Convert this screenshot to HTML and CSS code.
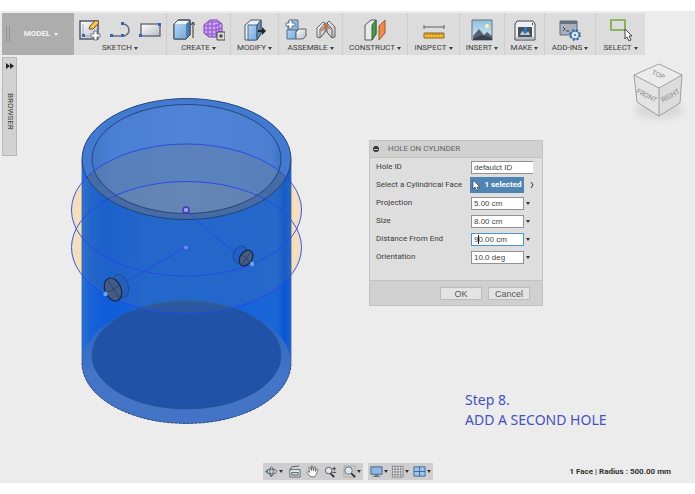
FILE: index.html
```html
<!DOCTYPE html>
<html lang="en">
<head>
<meta charset="utf-8">
<title>Hole on Cylinder</title>
<link rel="stylesheet" href="styles.css">
</head>
<body>
<svg class="defs" aria-hidden="true">
  <defs>
    <linearGradient id="blue" x1="0" y1="0" x2="1" y2="1"><stop offset="0" stop-color="#b5d6f2"/><stop offset="1" stop-color="#75a9da"/></linearGradient>
    <linearGradient id="pale" x1="0" y1="0" x2="1" y2="1"><stop offset="0" stop-color="#ffffff"/><stop offset="1" stop-color="#b5bac4"/></linearGradient>
    <linearGradient id="sky" x1="0" y1="0" x2="0" y2="1"><stop offset="0" stop-color="#91bedd"/><stop offset="1" stop-color="#d8eaf1"/></linearGradient>
  </defs>
</svg>
<div class="app">
  <header class="toolbar">
    <button class="workspace" type="button"><span class="grip"></span><span>MODEL</span><i class="caret"></i></button>
    <div class="group">
      <div class="icons">
        <svg class="icon" viewBox="0 0 22 22"><rect x="1" y="2" width="18" height="18" fill="url(#pale)" stroke="#4b515c" stroke-width="1.4"/><path d="M4 5v12h12" fill="none" stroke="#9aa6bb"/><rect x="3" y="15" width="3" height="3" fill="#3263c3"/><path d="M10 10l1-3 6-6 3 3-6 6z" fill="#f4c34c" stroke="#76511d"/><path d="M15 12h3v3h3v3h-3v3h-3v-3h-3v-3h3z" fill="#fff" stroke="#737985"/></svg>
        <svg class="icon" viewBox="0 0 22 22"><path d="M2 17h12a6 6 0 0 0 0-12" fill="none" stroke="#6a6e77" stroke-width="1.6"/><path d="M1 15h3v3H1zM12 15h3v3h-3zM12 3h3v3h-3z" fill="#3264c5"/></svg>
        <svg class="icon" viewBox="0 0 22 22"><rect x="2" y="5" width="19" height="12" fill="url(#pale)" stroke="#5d626c" stroke-width="1.3"/><path d="M19 4h3v3h-3zM0 15h3v3H0z" fill="#3264c5"/></svg>
      </div>
      <button class="label" type="button">SKETCH<i class="caret"></i></button>
    </div>
    <div class="group">
      <div class="icons">
        <svg class="icon" viewBox="0 0 22 22"><path d="M1 5l4-4h12v15l-4 4H1z" fill="#edf4fa" stroke="#3d4858"/><path d="M1 5h12v15H1z" fill="url(#blue)"/><path d="M13 5l4-4v15l-4 4z" fill="#4f7dac"/><path d="M1 5l4-4h12v15l-4 4H1z" fill="none" stroke="#3d4858"/><path d="M20 19V4M18 6l2-3 2 3" fill="none" stroke="#333"/></svg>
        <svg class="icon" viewBox="0 0 22 22"><path d="M7 1h7l5 4v8l-4 5H6l-5-4V6z" fill="#cba7ee" stroke="#7a3eb5"/><path d="M1 7h12l5-3M1 11h12l6-2M2 15h11l5-3M5 3v14M9 2v16M13 5v13M16 3v13M5 3h10" fill="none" stroke="#8c4dca"/><path d="M14 13h8v8h-8z" fill="#ddd" stroke="#444"/><path d="M16 17h4M18 15v4" stroke="#222"/></svg>
      </div>
      <button class="label" type="button">CREATE<i class="caret"></i></button>
    </div>
    <div class="group">
      <div class="icons">
        <svg class="icon" viewBox="0 0 22 22"><path d="M1 6l6-5h10v14l-5 6H1z" fill="#edf2f6" stroke="#4f5762"/><path d="M4 6h9v15H4z" fill="url(#blue)" stroke="#466b91"/><path d="M13 6l4-5v14l-4 6z" fill="#648db7" stroke="#3b5270"/><path d="M14 11h4V8l4 4-4 4v-3h-4z" fill="#222"/></svg>
      </div>
      <button class="label" type="button">MODIFY<i class="caret"></i></button>
    </div>
    <div class="group">
      <div class="icons">
        <svg class="icon" viewBox="0 0 22 22"><path d="M3 3l3-2h7v9l-2 2H3z" fill="url(#blue)" stroke="#4f6e90"/><path d="M2 11h9v9H2z" fill="url(#blue)" stroke="#4f6e90"/><path d="M11 13l3-3h7v7l-3 3h-7z" fill="url(#pale)" stroke="#5c626c"/><path d="M4 1h3v3h3v3H7v3H4V7H1V4h3z" fill="#fff" stroke="#657483"/></svg>
        <svg class="icon" viewBox="0 0 22 22"><path d="M2 9l6-6 2 1v9l-5 6-3-1zM12 4l2-2 6 6v10l-3 1-5-6z" fill="url(#pale)" stroke="#656565"/><path d="M5 10l5-6v9l-5 6zM12 4l5 6v9l-5-6z" fill="#d3d5d8" stroke="#656565"/><path d="M6 12l5-6M11 6l4 4" stroke="#d96d24" stroke-width="1.5"/></svg>
      </div>
      <button class="label" type="button">ASSEMBLE<i class="caret"></i></button>
    </div>
    <div class="group">
      <div class="icons">
        <svg class="icon" viewBox="0 0 22 22"><path d="M1 6l6-5h5v14l-4 6H1z" fill="#e7e9eb" stroke="#565c5c"/><path d="M8 6l4-5v14l-4 6z" fill="#4b9d45" stroke="#38653a"/><path d="M15 7l6-6v13l-6 7z" fill="#ee8c50" stroke="#a4572d"/></svg>
      </div>
      <button class="label" type="button">CONSTRUCT<i class="caret"></i></button>
    </div>
    <div class="group">
      <div class="icons">
        <svg class="icon" viewBox="0 0 22 22"><path d="M1 8h20M1 6v4M21 6v4" stroke="#59616c"/><path d="M1 14h20v5H1z" fill="#efb730" stroke="#8d6b20"/><path d="M4 14v2M7 14v2M10 14v2M13 14v2M16 14v2M19 14v2" stroke="#8d6b20"/></svg>
      </div>
      <button class="label" type="button">INSPECT<i class="caret"></i></button>
    </div>
    <div class="group">
      <div class="icons">
        <svg class="icon" viewBox="0 0 22 22"><path d="M1 1h20v20H1z" fill="url(#sky)" stroke="#66727d"/><circle cx="16" cy="7" r="2" fill="#fff4b2"/><path d="M2 17l6-7 5 6 3-3 5 4v4H2z" fill="#566371"/><path d="M2 20l9-4 10 3v2H2z" fill="#35404d"/></svg>
      </div>
      <button class="label" type="button">INSERT<i class="caret"></i></button>
    </div>
    <div class="group">
      <div class="icons">
        <svg class="icon" viewBox="0 0 22 22"><path d="M3 2h16l2 3v16H1V5z" fill="#edeff1" stroke="#41474f"/><path d="M4 8h14v10H4z" fill="#48515e"/><path d="M6 16h10l-2-4H8z" fill="#c5cad1"/><path d="M10 8h3v4h2l-4 3-3-3h2z" fill="#3476bd"/><path d="M2 19h18" stroke="#888"/><path d="M18 4h1v2h-1z" fill="#444"/></svg>
      </div>
      <button class="label" type="button">MAKE<i class="caret"></i></button>
    </div>
    <div class="group">
      <div class="icons">
        <svg class="icon" viewBox="0 0 22 22"><path d="M1 2h17v14H1z" fill="#a8b1bd" stroke="#656d79"/><path d="M1 2h17v3H1z" fill="#657182"/><path d="M4 8l2 2-2 2M7 12h3" fill="none" stroke="#354051"/><circle cx="16" cy="16" r="4" fill="#d5e5f5" stroke="#5580ae" stroke-width="1.4"/><circle cx="16" cy="16" r="5" fill="none" stroke="#31639a" stroke-width="1.6" stroke-dasharray="2 2"/><circle cx="16" cy="16" r="1" fill="#31639a"/></svg>
      </div>
      <button class="label" type="button">ADD-INS<i class="caret"></i></button>
    </div>
    <div class="group">
      <div class="icons">
        <svg class="icon" viewBox="0 0 22 22"><path d="M1 1h14v10H1z" fill="none" stroke="#77a83e" stroke-width="1.6"/><path d="M15 10v10l2-2 2 4 2-1-2-4h3z" fill="#fff" stroke="#444"/></svg>
      </div>
      <button class="label" type="button">SELECT<i class="caret"></i></button>
    </div>
  </header>

  <main class="canvas">
    <button class="browser" type="button">
      <svg class="expand" viewBox="0 0 8 6"><path d="M0 0l4 3-4 3zM4 0l4 3-4 3z" fill="#222"/></svg>
      <span>BROWSER</span>
    </button>

    <svg class="cylinder" viewBox="60 90 250 340" role="img" aria-label="Cylinder with two holes">
      <defs>
        <linearGradient id="body"><stop offset="0" stop-color="#2a70d9"/><stop offset=".04" stop-color="#1763d6"/><stop offset=".12" stop-color="#0f5cda"/><stop offset=".3" stop-color="#1763d8"/><stop offset=".8" stop-color="#1763d9"/><stop offset=".93" stop-color="#1b66d5"/><stop offset=".97" stop-color="#0b55d4"/><stop offset="1" stop-color="#1c64cf"/></linearGradient>
        <linearGradient id="inner"><stop offset="0" stop-color="#4076c8"/><stop offset=".1" stop-color="#4a7fd3"/><stop offset=".5" stop-color="#5183d6"/><stop offset=".95" stop-color="#4c7fd2"/><stop offset="1" stop-color="#3d73c6"/></linearGradient>
        <linearGradient id="base" x1="0" y1="0" x2="0" y2="1"><stop offset="0" stop-color="#1f66d2"/><stop offset=".25" stop-color="#2e68c8"/><stop offset=".6" stop-color="#4575c6"/><stop offset="1" stop-color="#4273c6"/></linearGradient>
        <clipPath id="rim"><ellipse cx="186.500" cy="159" rx="104.500" ry="60.500"/></clipPath>
        <clipPath id="silhouette"><path d="M82 159a104.500 60.500 0 0 1 209 0v204a104.500 60.500 0 0 1-209 0z"/></clipPath>
        <clipPath id="opening"><ellipse cx="186.500" cy="159" rx="94.500" ry="54.500"/></clipPath>
      </defs>
      <g fill="#f3dfbd"><ellipse cx="186.500" cy="210" rx="115" ry="66"/><ellipse cx="186.500" cy="247.500" rx="115" ry="66"/></g>
      <path d="M82 159a104.500 60.500 0 0 1 209 0v204a104.500 60.500 0 0 1-209 0z" fill="url(#body)"/>
      <ellipse cx="186.500" cy="363" rx="104.500" ry="60.500" fill="url(#base)"/>
      <ellipse cx="186.500" cy="355" rx="94.500" ry="54" fill="#2053a7"/>
      <path d="M92 355a94.500 54 0 0 1 189 0" fill="none" stroke="#36577f" stroke-width=".7" stroke-dasharray="2 1"/>
      <path d="M112 333C150 290 223 290 261 333" fill="none" stroke="#315b9c" stroke-width=".5"/>
      <g clip-path="url(#silhouette)" fill="#7f866f" opacity=".12"><ellipse cx="186.500" cy="210" rx="115" ry="66"/><ellipse cx="186.500" cy="247.500" rx="115" ry="66"/></g>
      <ellipse cx="186.500" cy="159" rx="104.500" ry="60.500" fill="#427ad2"/>
      <ellipse cx="186.500" cy="210" rx="115" ry="66" clip-path="url(#rim)" fill="#49638a" opacity=".6"/>
      <ellipse cx="186.500" cy="159" rx="94.500" ry="54.500" fill="url(#inner)"/>
      <g clip-path="url(#opening)"><ellipse cx="186.500" cy="210" rx="115" ry="66" fill="#6a8198" opacity=".42"/><ellipse cx="186.500" cy="247.500" rx="115" ry="66" fill="#8a91a0" opacity=".2"/></g>
      <g fill="none" stroke="#20395e" stroke-width=".8"><path d="M82 159v204M291 159v204" stroke="#3c609b"/><ellipse cx="186.500" cy="159" rx="104.500" ry="60.500"/><ellipse cx="186.500" cy="159" rx="94.500" ry="54.500"/><path d="M82 363a104.500 60.500 0 0 0 209 0" stroke-dasharray="3 1"/><path d="M92 355a94.500 54 0 0 0 189 0" stroke="#234a88" stroke-width=".6"/></g>
      <g fill="none" stroke="#2545ea" stroke-width=".9"><ellipse cx="186.500" cy="210" rx="115" ry="66"/><ellipse cx="186.500" cy="247.500" rx="115" ry="66"/><path d="M186 210l30 28 36 26M186 247l-81 47"/></g>
      <g stroke="#183c78" stroke-width=".8"><ellipse cx="121" cy="286" rx="7" ry="12" transform="rotate(-20 121 286)" fill="#285faf" opacity=".7"/><ellipse cx="113" cy="289.500" rx="8" ry="12" transform="rotate(-23 113 289.500)" fill="#425c86" stroke="#152846" stroke-width="1.2"/><path d="M107 279l13 20M105 294l14-8" stroke="#233c6e"/><ellipse cx="240.500" cy="255" rx="7" ry="9" transform="rotate(18 240.500 255)" fill="#205fc8" opacity=".8"/><ellipse cx="246" cy="258" rx="6" ry="8.500" transform="rotate(35 246 258)" fill="#495c80" stroke="#152846" stroke-width="1.2"/><path d="M242 264l9-12M242 255l10 9"/></g>
      <circle cx="186" cy="210" r="3" fill="#8da6f4" stroke="#4935bd" stroke-width="1.6"/>
      <circle cx="186" cy="247.500" r="2.500" fill="#668bf4" stroke="#3d50dc"/>
      <g fill="#69a4f3"><circle cx="105.500" cy="294" r="2.200"/><circle cx="252" cy="264" r="2.200"/></g>
    </svg>

    <svg class="viewcube" viewBox="625 58 65 68" role="img" aria-label="View cube">
      <ellipse cx="659" cy="110" rx="24" ry="9" fill="#d8d8d8" class="shade"/>
      <path d="M634 75l25-11 23 11-23 13z" fill="#ececec"/><path d="M634 75l25 13v28l-22-14z" fill="#e4e4e4"/><path d="M682 75l-23 13v28l21-13z" fill="#dcdcdc"/>
      <path d="M634 75l25-11 23 11-23 13zM634 75l3 27 22 14 21-13 2-28M659 88v28" fill="none" stroke="#8d8d8d" stroke-width=".8"/>
      <g class="face"><text x="658" y="77" transform="rotate(25 658 75)">TOP</text><text x="647" y="98" transform="rotate(27 647 95)">FRONT</text><text x="670" y="98" transform="rotate(-29 670 95)">RIGHT</text></g>
    </svg>

    <form class="dialog">
      <h1 class="dialog-title"><i class="collapse"></i>HOLE ON CYLINDER</h1>
      <div class="fields">
        <label for="hole-id">Hole ID</label><input class="wide" id="hole-id" value="defaulct ID">
        <label for="face">Select a Cylindrical Face</label><button class="pick" id="face" type="button"><svg class="pointer" viewBox="0 0 8 11"><path d="M1 0v9l2-2 2 4 1-1-1-3h3z" fill="#fff" stroke="#263746" stroke-width=".6"/></svg>1 selected</button><button class="more" type="button" aria-label="Clear"><svg viewBox="0 0 4 6"><path d="M1 0l2 3-2 3" fill="none" stroke="#333"/></svg></button>
        <label for="projection">Projection</label><input id="projection" value="5.00 cm"><button class="more" type="button" aria-label="Projection values"><i class="caret"></i></button>
        <label for="size">Size</label><input id="size" value="8.00 cm"><button class="more" type="button" aria-label="Size values"><i class="caret"></i></button>
        <label for="distance">Distance From End</label><span class="editing"><input id="distance" value="90.00 cm"><i class="text-cursor"></i></span><button class="more" type="button" aria-label="Distance values"><i class="caret"></i></button>
        <label for="orientation">Orientation</label><input id="orientation" value="10.0 deg"><button class="more" type="button" aria-label="Orientation values"><i class="caret"></i></button>
      </div>
      <div class="actions"><button type="button">OK</button><button type="button">Cancel</button></div>
    </form>

    <p class="note">Step 8.<br>ADD A SECOND HOLE</p>
  </main>

  <footer class="bottom">
    <nav class="navbar">
      <div class="tools">
        <button type="button" aria-label="Orbit"><svg viewBox="0 0 14 14"><ellipse cx="7" cy="7" rx="5.500" ry="2.500" fill="none" stroke="#59616c"/><ellipse cx="7" cy="7" rx="2" ry="5" fill="none" stroke="#59616c"/><path d="M0 7l3-2v4zM5 10l4 1-3 2z" fill="#476b91"/></svg><i class="caret"></i></button>
        <button type="button" aria-label="Look at"><svg viewBox="0 0 14 14"><path d="M2 5h11v8H2z" fill="#eee" stroke="#565c64"/><path d="M2 5l2-3 8-1" fill="none" stroke="#565c64"/><path d="M4 8h7v3H4z" fill="#c8d1db" stroke="#565c64"/></svg></button>
        <button type="button" aria-label="Pan"><svg viewBox="0 0 14 14"><path d="M4 12L1 8l1-1 2 1-1-5 1-1 2 4V1h1l1 5 1-4h1v5l2-3 1 1-2 5-2 3z" fill="#fff" stroke="#555" stroke-width=".8"/></svg></button>
        <button type="button" aria-label="Zoom"><svg viewBox="0 0 14 14"><circle cx="5" cy="6" r="3.500" fill="#dce9f1" stroke="#555"/><path d="M7 9l4 4" stroke="#333" stroke-width="2"/><path d="M9 4h4M11 2v4M9 8h4" stroke="#444"/></svg></button>
        <button type="button" aria-label="Zoom window"><svg viewBox="0 0 14 14"><path d="M1 1h12v12H1z" fill="none" stroke="#888" stroke-dasharray="1 1"/><circle cx="6" cy="6" r="4" fill="#d9ebf0" stroke="#667"/><path d="M9 9l4 4" stroke="#333" stroke-width="2"/></svg><i class="caret"></i></button>
      </div>
      <div class="tools display">
        <button type="button" aria-label="Display"><svg viewBox="0 0 14 14"><path d="M1 2h12v8H1z" fill="#89b7e6" stroke="#47607d"/><path d="M5 10h4v2h2v1H3v-1h2z" fill="#66717e"/></svg><i class="caret"></i></button>
        <button type="button" aria-label="Grid"><svg viewBox="0 0 14 14"><path d="M1 1h12v12H1z" fill="#eee"/><path d="M1.500 1v12M4.500 1v12M7.500 1v12M10.500 1v12M13 1v12M1 1.500h12M1 4.500h12M1 7.500h12M1 10.500h12M1 13h12" stroke="#6d737a" stroke-width=".8"/></svg><i class="caret"></i></button>
        <button type="button" aria-label="Viewports"><svg viewBox="0 0 14 14"><path d="M1 2h12v10H1z" fill="#9bc5ee" stroke="#3f6592"/><path d="M7 2v10M1 7h12" stroke="#3f6592"/></svg><i class="caret"></i></button>
      </div>
    </nav>
    <output class="status">1 Face | Radius : 500.00 mm</output>
  </footer>
</div>
</body>
</html>
```
FILE: styles.css
```css
* { box-sizing: border-box; }
body { margin: 0; background: #fff; font: 8px/12px Roboto, "Liberation Sans", sans-serif; color: #3c3c3c; }
button { display: flex; align-items: center; justify-content: center; margin: 0; padding: 0; border: 0; background: none; color: inherit; font: inherit; white-space: nowrap; }
svg { display: block; }
.defs { position: absolute; width: 0; height: 0; }
.app { display: flex; flex-direction: column; min-height: calc(100vh - 22px); margin: 11px 0; background: #ececec; }
.caret { width: 0; height: 0; flex: none; border: 2px solid transparent; border-top: 3px solid currentColor; border-bottom: 0; }

.toolbar { display: grid; grid-template-columns: 72px 93px 64px 48px 64px 65px 52px 45px 40px 51px 49px; align-self: flex-start; margin: 2px 2px 0; background: #dcdcdc; }
.workspace { position: relative; gap: 4px; padding-left: 6px; background: #adadad; color: #f4f4f4; font-weight: 700; }
.grip { position: absolute; left: 4px; top: 13px; width: 4px; height: 16px; border: 1px solid #929292; border-width: 0 1px; }
.group { display: flex; flex-direction: column; align-items: center; gap: 1px; padding: 6px 0 1px; border-right: 1px solid #cecece; }
.group:last-child { border-right: 0; }
.icons { display: flex; justify-content: center; gap: 8px; }
.icon { width: 22px; height: 22px; }
.label { gap: 2px; }

.canvas { position: relative; flex: 1; min-height: 405px; }
.browser { position: absolute; left: 2px; top: 2px; width: 15px; height: 99px; flex-direction: column; justify-content: flex-start; gap: 24px; padding-top: 5px; border: 1px solid #b8b8b8; background: #d2d2d2; }
.browser span { writing-mode: vertical-rl; }
.expand { width: 8px; height: 6px; }
.cylinder { position: absolute; left: 60px; top: 35px; width: 250px; height: 340px; }
.viewcube { position: absolute; right: 5px; top: 3px; width: 65px; height: 68px; }
.shade { filter: blur(3px); }
.face { font-size: 7px; fill: #888; text-anchor: middle; }

.dialog { position: absolute; left: 369px; top: 85px; width: 174px; border: 1px solid #c2c2c2; background: #dedede; }
.dialog-title { display: flex; align-items: center; gap: 9px; height: 17px; margin: 0; padding-left: 3px; background: #d0d0d0; border-bottom: 1px solid #c2c2c2; color: #666; font-size: 8px; font-weight: 400; }
.collapse { display: flex; align-items: center; justify-content: center; width: 6px; height: 6px; border-radius: 50%; background: #333; }
.collapse::after { content: ""; width: 4px; height: 1px; background: #ccc; }
.fields { display: grid; grid-template-columns: 94px 54px 12px; grid-auto-rows: 18px; align-items: center; padding: 0 6px 14px; }
.fields label { white-space: nowrap; }
.fields input { display: block; width: 53px; height: 13px; margin-left: 1px; padding: 0 2px; border: 1px solid #929292; border-radius: 0; background: #fff; color: #444; font: 8px "Liberation Sans", sans-serif; }
.fields .wide { grid-column: 2 / -1; width: 62px; border-right: 0; }
.pick { gap: 4px; height: 16px; background: #4f84b3; color: #fff; font-weight: 700; }
.pointer { width: 8px; height: 11px; }
.more { justify-content: flex-start; height: 13px; padding-left: 2px; color: #333; }
.more svg { width: 4px; height: 6px; margin-left: 4px; }
.editing { position: relative; }
.fields .editing input { border-color: #4f93cf; }
.text-cursor { position: absolute; left: 8px; top: 2px; width: 1px; height: 9px; background: #222; }
.actions { display: flex; justify-content: flex-end; gap: 6px; padding: 6px 12px 5px; border-top: 1px solid #c2c2c2; background: #d0d0d0; }
.actions button { width: 42px; height: 13px; border: 1px solid #bcbcbc; background: #e3e3e3; font: 9px "Liberation Sans", sans-serif; color: #555; }
.note { position: absolute; left: 465px; top: 335px; margin: 0; color: #4650bf; font: 14px/20px "Noto Sans", sans-serif; }

.bottom { display: grid; grid-template-columns: 1fr auto 1fr; align-items: center; padding: 0 24px 3px; }
.navbar { display: flex; gap: 5px; grid-column: 2; }
.tools { display: flex; align-items: center; justify-content: space-between; width: 100px; height: 17px; padding: 0 2px; background: #cecece; color: #333; }
.tools button { gap: 1px; }
.tools svg { width: 13px; height: 13px; }
.display { width: 65px; }
.status { justify-self: end; color: #333; font-weight: 700; white-space: nowrap; }
```
